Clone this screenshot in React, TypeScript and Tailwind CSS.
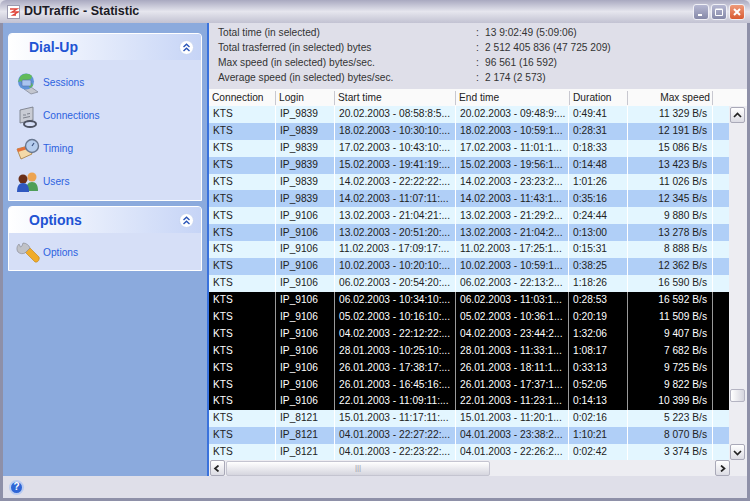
import React from "react";

const font = { fontFamily: '"Liberation Sans", Arial, sans-serif' };

const raw: [string, string, string, string, string][] = [
  ["IP_9839", "20.02.2003 - 08:58:8:5...", "20.02.2003 - 09:48:9:...", "0:49:41", "11 329 B/s"],
  ["IP_9839", "18.02.2003 - 10:30:10:...", "18.02.2003 - 10:59:1...", "0:28:31", "12 191 B/s"],
  ["IP_9839", "17.02.2003 - 10:43:10:...", "17.02.2003 - 11:01:1...", "0:18:33", "15 086 B/s"],
  ["IP_9839", "15.02.2003 - 19:41:19:...", "15.02.2003 - 19:56:1...", "0:14:48", "13 423 B/s"],
  ["IP_9839", "14.02.2003 - 22:22:22:...", "14.02.2003 - 23:23:2...", "1:01:26", "11 026 B/s"],
  ["IP_9839", "14.02.2003 - 11:07:11:...", "14.02.2003 - 11:43:1...", "0:35:16", "12 345 B/s"],
  ["IP_9106", "13.02.2003 - 21:04:21:...", "13.02.2003 - 21:29:2...", "0:24:44", "9 880 B/s"],
  ["IP_9106", "13.02.2003 - 20:51:20:...", "13.02.2003 - 21:04:2...", "0:13:00", "13 278 B/s"],
  ["IP_9106", "11.02.2003 - 17:09:17:...", "11.02.2003 - 17:25:1...", "0:15:31", "8 888 B/s"],
  ["IP_9106", "10.02.2003 - 10:20:10:...", "10.02.2003 - 10:59:1...", "0:38:25", "12 362 B/s"],
  ["IP_9106", "06.02.2003 - 20:54:20:...", "06.02.2003 - 22:13:2...", "1:18:26", "16 590 B/s"],
  ["IP_9106", "06.02.2003 - 10:34:10:...", "06.02.2003 - 11:03:1...", "0:28:53", "16 592 B/s"],
  ["IP_9106", "05.02.2003 - 10:16:10:...", "05.02.2003 - 10:36:1...", "0:20:19", "11 509 B/s"],
  ["IP_9106", "04.02.2003 - 22:12:22:...", "04.02.2003 - 23:44:2...", "1:32:06", "9 407 B/s"],
  ["IP_9106", "28.01.2003 - 10:25:10:...", "28.01.2003 - 11:33:1...", "1:08:17", "7 682 B/s"],
  ["IP_9106", "26.01.2003 - 17:38:17:...", "26.01.2003 - 18:11:1...", "0:33:13", "9 725 B/s"],
  ["IP_9106", "26.01.2003 - 16:45:16:...", "26.01.2003 - 17:37:1...", "0:52:05", "9 822 B/s"],
  ["IP_9106", "22.01.2003 - 11:09:11:...", "22.01.2003 - 11:23:1...", "0:14:13", "10 399 B/s"],
  ["IP_8121", "15.01.2003 - 11:17:11:...", "15.01.2003 - 11:20:1...", "0:02:16", "5 223 B/s"],
  ["IP_8121", "04.01.2003 - 22:27:22:...", "04.01.2003 - 23:38:2...", "1:10:21", "8 070 B/s"],
  ["IP_8121", "04.01.2003 - 22:23:22:...", "04.01.2003 - 22:26:2...", "0:02:42", "3 374 B/s"],
];

function Chevrons() {
  return (
    <span className="flex h-[15px] w-[15px] items-center justify-center rounded-full border border-[#c6d4f2] bg-white">
      <svg width="9" height="9" viewBox="0 0 9 9" fill="none" stroke="#2a55b8" strokeWidth="1.4">
        <path d="M1.5 4 4.5 1.2 7.5 4M1.5 8 4.5 5.2 7.5 8" />
      </svg>
    </span>
  );
}

function IconSessions() {
  return (
    <svg width="24" height="24" viewBox="0 0 24 24">
      <path d="M8 17l7-2 7 5-7 2z" fill="#c3c6cf" stroke="#7d8290" strokeWidth=".7" />
      <circle cx="10" cy="9.5" r="8" fill="#5f93d8" />
      <path d="M4 5c3-4 9-4 12-1l-1 3-3 1-1 3-4 1-2-3-3 1z" fill="#62bb5b" />
      <path d="M12 13l4-2 1 3-3 2z" fill="#62bb5b" />
      <rect x="6" y="8" width="9" height="6" rx="1" fill="#a9c4ef" stroke="#5570a8" strokeWidth=".6" />
    </svg>
  );
}
function IconConnections() {
  return (
    <svg width="24" height="24" viewBox="0 0 24 24">
      <path d="M4 5l13-3v13L4 18z" fill="#c9ccd4" stroke="#70747f" strokeWidth=".8" />
      <path d="M7 10h3M11 9l3-.5M7 13l7-1.500" stroke="#7d818c" strokeWidth="1" />
      <ellipse cx="14" cy="19" rx="6" ry="3" fill="none" stroke="#4c5160" strokeWidth="2" />
    </svg>
  );
}
function IconTiming() {
  return (
    <svg width="24" height="24" viewBox="0 0 24 24">
      <path d="M1 11l11-3 4 8-11 5z" fill="#f3d9a8" stroke="#a57a3b" strokeWidth=".8" />
      <path d="M1 11l11-3 1 2.500L2 14z" fill="#e4713a" />
      <circle cx="16" cy="8" r="6.500" fill="#b5cdee" stroke="#687790" strokeWidth="1.400" />
      <path d="M16 8l2-3" stroke="#38507e" strokeWidth="1.200" />
    </svg>
  );
}
function IconUsers() {
  return (
    <svg width="24" height="24" viewBox="0 0 24 24">
      <circle cx="16" cy="6" r="4.500" fill="#eda451" />
      <path d="M10 20c0-6 2-9 6-9s6 3 6 9z" fill="#4f9e58" />
      <circle cx="7" cy="8" r="4.500" fill="#6b2f18" />
      <path d="M1 21c0-6 2-9 6-9s6 3 6 9z" fill="#2f58c0" />
    </svg>
  );
}
function IconWrench() {
  return (
    <svg width="24" height="24" viewBox="0 0 24 24">
      <path d="M9 10l5-4 9 9c1 2-1 6-4 5z" fill="#f0ac2a" stroke="#bd7f16" strokeWidth=".6" />
      <path d="M3 2C1 4 0 7 2 10c2 2 5 2 7 1l5-5C13 3 10 1 7 1L6 4 4.500 5z" fill="#c0c2c8" stroke="#85878f" strokeWidth=".6" />
    </svg>
  );
}

function Item({ icon, label }: { icon: React.ReactNode; label: string }) {
  return (
    <div className="flex h-[33px] items-center pl-[7px]">
      <span className="flex w-[27px] shrink-0 items-center">{icon}</span>
      <span className="text-[10.2px] text-[#2c62e0]">{label}</span>
    </div>
  );
}

function Panel({ title, children, h }: { title: string; children: React.ReactNode; h: string }) {
  return (
    <div className={`mx-[5px] flex flex-col overflow-hidden rounded-t-[4px] border border-white bg-[#d6dff7] ${h}`}>
      <div className="flex h-[26px] shrink-0 items-center justify-between bg-gradient-to-r from-white to-[#c6d4f6] pl-[20px] pr-[7px]">
        <span className="text-[14px] font-bold text-[#2153d3]">{title}</span>
        <Chevrons />
      </div>
      {children}
    </div>
  );
}

function ScrollBtn({ d }: { d: string }) {
  return (
    <span className="flex h-[16px] w-[15px] shrink-0 items-center justify-center rounded-[2px] border border-[#a9a9b8] bg-gradient-to-b from-white to-[#dcdce4]">
      <svg width="9" height="7" viewBox="0 0 9 7" fill="none" stroke="#222" strokeWidth="1.700">
        <path d={d} />
      </svg>
    </span>
  );
}

function WinBtn({ kind }: { kind: "min" | "max" | "close" }) {
  const bg =
    kind === "close"
      ? "bg-gradient-to-b from-[#ee9a7a] to-[#d85a30]"
      : "bg-gradient-to-b from-[#b6b8d2] to-[#8588a8]";
  return (
    <span className={`flex h-[16px] w-[16px] items-center justify-center rounded-[3px] border border-[#f0f0f6] ${bg}`}>
      <svg width="10" height="10" viewBox="0 0 10 10" fill="none" stroke="#fff">
        {kind === "min" && <path d="M2 8h4" strokeWidth="2" />}
        {kind === "max" && <path d="M1.500 2.500h7v6h-7zM1.500 2h7" strokeWidth="1" />}
        {kind === "close" && <path d="M2 2l6 6M8 2l-6 6" strokeWidth="2" />}
      </svg>
    </span>
  );
}

const cols = ["w-[67px]", "w-[59px]", "w-[121px]", "w-[113px]", "w-[59px]", "w-[85px]"];
const headerCols = ["w-[67px]", "w-[59px]", "w-[121px]", "w-[114px]", "w-[58px]", "w-[85px]"];

function InfoRow({ label, value }: { label: string; value: string }) {
  return (
    <div className="flex h-[15px] items-center">
      <span className="w-[267px] pl-[9px]">{label}</span>
      <span className="w-[9px]">:</span>
      <span>{value}</span>
    </div>
  );
}

export default function App() {
  return (
    <div style={font} className="flex h-[501px] w-[750px] flex-col overflow-hidden bg-[#dfdfe9] text-[10.2px] leading-none text-[#222]">
      <div className="flex h-[23px] shrink-0 items-center justify-between rounded-t-[6px] bg-gradient-to-b from-[#a9a9c0] via-[#e6e6ee] to-[#c2c2d2] pl-[7px] pr-[5px]">
        <div className="flex items-center gap-[4px]">
          <span className="flex h-[14px] w-[13px] items-center justify-center border border-[#9b9bb0] bg-white">
            <svg width="10" height="10" viewBox="0 0 10 10" fill="none" stroke="#e0443a" strokeWidth="1.300">
              <path d="M1 2h7L3 5h6L4 8h3" />
            </svg>
          </span>
          <span className="text-[12.500px] font-bold text-[#1a1a24]">DUTraffic - Statistic</span>
        </div>
        <div className="flex gap-[2px]">
          <WinBtn kind="min" />
          <WinBtn kind="max" />
          <WinBtn kind="close" />
        </div>
      </div>

      <div className="flex min-h-0 flex-1 flex-col border-x-[3px] border-b-[3px] border-[#8e90a8]">
        <div className="flex min-h-0 flex-1">
          <div className="flex w-[206px] shrink-0 flex-col gap-[5px] border-r-[2px] border-[#3a72dc] bg-[#8baadd] pt-[10px]">
            <Panel title="Dial-Up" h="h-[168px]">
              <div className="pt-[7px]">
                <Item icon={<IconSessions />} label="Sessions" />
                <Item icon={<IconConnections />} label="Connections" />
                <Item icon={<IconTiming />} label="Timing" />
                <Item icon={<IconUsers />} label="Users" />
              </div>
            </Panel>
            <Panel title="Options" h="h-[65px]">
              <div className="pt-[4px]">
                <Item icon={<IconWrench />} label="Options" />
              </div>
            </Panel>
          </div>

          <div className="flex min-w-0 flex-1 flex-col">
            <div className="h-[66px] shrink-0 pt-[3px] text-[#333]">
              <InfoRow label="Total time (in selected)" value="13 9:02:49 (5:09:06)" />
              <InfoRow label="Total trasferred (in selected) bytes" value="2 512 405 836 (47 725 209)" />
              <InfoRow label="Max speed (in selected) bytes/sec." value="96 561 (16 592)" />
              <InfoRow label="Average speed (in selected) bytes/sec." value="2 174 (2 573)" />
            </div>

            <div className="flex h-[17px] shrink-0 items-center bg-[#fafafa] text-[#222]">
              {["Connection", "Login", "Start time", "End time", "Duration", "Max speed"].map((h, i) => (
                <div
                  key={h}
                  className={`h-[14px] shrink-0 border-r border-[#c8c8d0] leading-[14px] ${headerCols[i]} ${i === 5 ? "pr-[2px] text-right" : "pl-[3px]"}`}
                >
                  {h}
                </div>
              ))}
            </div>

            <div className="flex min-h-0 flex-1">
              <div className="flex min-w-0 flex-1 flex-col">
                <div className="min-h-0 flex-1 overflow-hidden">
                  {raw.map((r, i) => {
                    const sel = i >= 11 && i <= 17;
                    const bg = sel ? "bg-black text-white" : i % 2 === 0 ? "bg-[#e3f6ff]" : "bg-[#b0cff7]";
                    const sep = sel ? "border-[#9a9a9a]" : "border-white";
                    const cells = ["KTS", ...r];
                    return (
                      <div key={i} className={`flex h-[16.9px] items-center ${bg}`}>
                        {cells.map((c, j) => (
                          <div
                            key={j}
                            className={`flex h-full shrink-0 items-center whitespace-nowrap border-r ${sep} ${cols[j]} ${j === 5 ? "justify-end pr-[5px]" : "pl-[4px]"}`}
                          >
                            {c}
                          </div>
                        ))}
                      </div>
                    );
                  })}
                </div>
              </div>
              <div className="flex w-[18px] shrink-0 flex-col items-start bg-[#ededf2] pl-[1px] pt-[1px]">
                <ScrollBtn d="M1 5 4.500 1.500 8 5" />
                <div className="flex-1 pt-[266px]">
                  <div className="h-[13px] w-[15px] rounded-[2px] border border-[#b4b4c2] bg-gradient-to-r from-white to-[#d5d5de]" />
                </div>
                <ScrollBtn d="M1 2 4.500 5.500 8 2" />
              </div>
            </div>

            <div className="flex h-[16px] shrink-0 items-center bg-[#ededf2] pl-[1px] pr-[17px]">
              <ScrollBtn d="M5.500 .5 2 3.500 5.500 6.500" />
              <div className="ml-[1px] flex h-[15px] w-[264px] items-center justify-center rounded-[2px] border border-[#c4c4d0] bg-gradient-to-b from-white to-[#d5d5de] text-[8px] text-[#9a9aa6]">
                |||
              </div>
              <div className="flex-1" />
              <ScrollBtn d="M3 .5 6.500 3.500 3 6.500" />
            </div>
          </div>
        </div>

        <div className="flex h-[22px] shrink-0 items-center bg-[#dfdfe9] pl-[6px]">
          <span className="flex h-[15px] w-[15px] items-center justify-center rounded-full border-2 border-[#b9cbf0] bg-[#2f66d6] text-[10px] font-bold text-white">
            ?
          </span>
        </div>
      </div>
    </div>
  );
}
